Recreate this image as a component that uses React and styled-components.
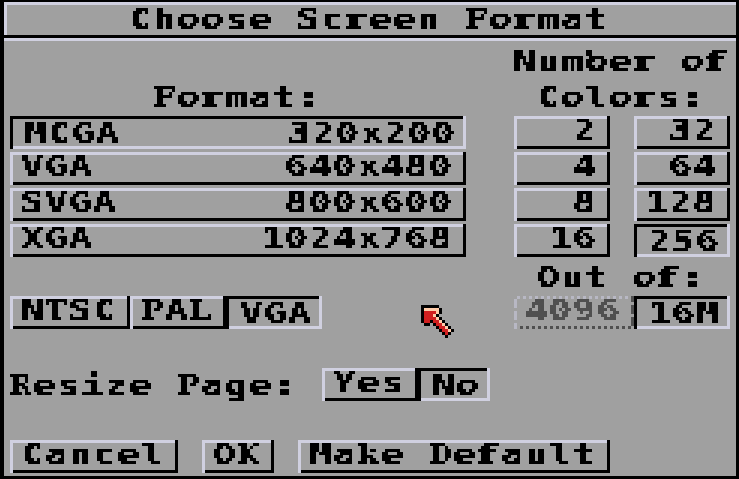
import React from "react";
import styled, { createGlobalStyle, css } from "styled-components";

const GREY = "#a0a0a0";
const LIGHT = "#d0d0e0";
const CELL = 24;

const Global = createGlobalStyle`
  html, body { margin: 0; padding: 0; background: #000; }
  * { box-sizing: border-box; }
`;

const FilterDefs = styled.svg`
  position: absolute;
  width: 0;
  height: 0;
`;

const Word = styled.span`
  display: flex;
  flex: none;
  width: ${(p) => p.$cells * CELL}px;
  height: 27px;
  text-align: left;
  filter: url(#pixels);
`;

const Letter = styled.span`
  flex: none;
  width: ${CELL}px;
  height: 27px;
  white-space: pre;
  font: bold 28.8px/27px "DejaVu Sans Mono", monospace;
  text-shadow: 0.5px 0 currentColor;
  transform-origin: 0 0;
  transform: translate(-1.3px, -2.5px) scaleX(1.3);
`;

/* Letters with narrow counters, which the extra weight would close up. */
const OpenLetter = styled(Letter)`
  text-shadow: none;
  transform: translate(-0.5px, -2.5px) scaleX(1.3);
`;

const SlabLetter = styled(Letter)`
  font-family: "DejaVu Serif", serif;
  text-shadow: none;
  transform: translate(-0.5px, -2.5px) scaleX(${(p) => p.$stretch});
`;

/* Horizontal stretch that makes each slab letter fill its 24px cell. */
const SLAB = {
  F: 1.08, T: 0.98, P: 1.02, D: 0.88, R: 0.96, L: 1.08, K: 0.86,
  r: 1.4, f: 1.5, k: 1.04,
};

function Text({ children }) {
  return (
    <Word $cells={children.length}>
      {[...children].map((c, i) => {
        if (SLAB[c]) return <SlabLetter key={i} $stretch={SLAB[c]}>{c}</SlabLetter>;
        if ("Mx2".includes(c)) return <OpenLetter key={i}>{c}</OpenLetter>;
        return <Letter key={i}>{c}</Letter>;
      })}
    </Word>
  );
}

const Dialog = styled.main`
  width: 739px;
  height: 479px;
  overflow: hidden;
  border: solid #000;
  border-width: 2px 3px 3px 4px;
  background: ${GREY};
  color: #000;
  display: flex;
  flex-direction: column;
`;

const TitleBar = styled.header`
  height: 36px;
  display: flex;
  justify-content: center;
  padding: 6px 0 0;
  box-shadow: inset 0 -3px #000, inset 3px 0 ${LIGHT}, inset 0 3px ${LIGHT};
`;

const Body = styled.div`
  flex: 1;
  border-top: 3px solid ${LIGHT};
  padding: 9px 6px 3px;
  display: flex;
  flex-direction: column;
`;

const Choices = styled.div`
  display: flex;
  justify-content: space-between;
  height: 279px;
`;

const Formats = styled.section`
  width: 456px;
  display: flex;
  flex-direction: column;
`;

const Colors = styled.section`
  width: 216px;
  display: flex;
  flex-direction: column;
`;

const Heading = styled.div`
  height: ${(p) => p.$height}px;
  display: flex;
  flex-direction: column;
  align-items: center;
  justify-content: flex-end;
  gap: 9px;
  padding-bottom: 3px;
`;

const List = styled.div`
  display: grid;
  gap: 3px;
`;

const ColorGrid = styled.div`
  display: grid;
  grid-template-columns: 96px 96px;
  gap: 3px 24px;
`;

const Strip = styled.div`
  display: flex;
  margin-top: ${(p) => p.$top || 0}px;
`;

const raised = css`
  padding: 3px 12px 0;
  box-shadow: inset 3px 0 ${LIGHT}, inset -3px 0 #000, inset 0 3px ${LIGHT},
    inset 0 -3px #000;
`;

const pressed = css`
  padding: 6px 9px 0 15px;
  box-shadow: inset 3px 0 #000, inset -3px 0 ${LIGHT}, inset 0 3px #000,
    inset 0 -3px ${LIGHT};
`;

const Button = styled.button`
  border: 0;
  border-radius: 0;
  margin: 0;
  height: 33px;
  background: ${GREY};
  color: #000;
  display: flex;
  align-items: flex-start;
  justify-content: ${(p) => p.$justify || "space-between"};
  ${(p) => (p.$pressed ? pressed : raised)}
`;

const GhostButton = styled.button`
  border: 0;
  margin: 0;
  width: 120px;
  height: 33px;
  padding: 3px 12px 0;
  display: flex;
  align-items: flex-start;
  color: #505050;
  background:
    repeating-linear-gradient(90deg, #b8b8c4 0 3px, transparent 3px 6px) 3px 0 / 114px 3px no-repeat,
    repeating-linear-gradient(90deg, #505050 0 3px, transparent 3px 6px) 6px 30px / 111px 3px no-repeat,
    repeating-linear-gradient(180deg, #b8b8c4 0 9px, transparent 9px 12px) 0 3px / 3px 30px no-repeat,
    linear-gradient(180deg, #505050 0 6px, transparent 6px 9px, #505050 9px 18px, transparent 18px 21px, #505050 21px 30px) 117px 0 / 3px 30px no-repeat,
    ${GREY};
`;

const ResizeRow = styled.div`
  display: flex;
  align-items: flex-start;
  margin-top: 39px;
  gap: 24px;
`;

const ResizeLabel = styled.div`
  padding-top: 6px;
`;

const Actions = styled.footer`
  display: flex;
  gap: 24px;
  margin-top: 39px;
`;

const Pointer = styled.svg`
  position: absolute;
  left: 421px;
  top: 305px;
`;

const POINTER_ROWS = [
  "kkkkkk",
  "kpppppk",
  "krrrrpk",
  "krrrpk",
  "krrrrpk",
  "krrkrrpk",
  " kk krrpk",
  "     krrpk",
  "      krrpk",
  "       krk",
  "        k",
];
const INK = { k: "#000", p: "#ffccaa", r: "#d02020" };

function Arrow() {
  return (
    <Pointer width="36" height="36" shapeRendering="crispEdges">
      {POINTER_ROWS.flatMap((row, y) =>
        [...row].map((c, x) =>
          INK[c] ? (
            <rect key={`${x}-${y}`} x={x * 3} y={y * 3} width="3" height="3" fill={INK[c]} />
          ) : null
        )
      )}
    </Pointer>
  );
}

const formats = [
  ["MCGA", "320x200", true],
  ["VGA", "640x480"],
  ["SVGA", "800x600"],
  ["XGA", "1024x768"],
];
const counts = ["2", "32", "4", "64", "8", "128", "16", "256"];

export default function App() {
  return (
    <>
      <Global />
      <FilterDefs aria-hidden="true">
        <filter id="pixels" x="0" y="0" width="100%" height="100%" colorInterpolationFilters="sRGB">
          <feFlood x="1" y="1" width="1" height="1" />
          <feComposite width="3" height="3" />
          <feTile result="grid" />
          <feComposite in="SourceGraphic" in2="grid" operator="in" />
          <feComponentTransfer>
            <feFuncA type="discrete" tableValues="0 1" />
          </feComponentTransfer>
          <feMorphology operator="dilate" radius="1" />
        </filter>
      </FilterDefs>
      <Dialog>
        <TitleBar>
          <Text>Choose Screen Format</Text>
        </TitleBar>
        <Body>
          <Choices>
            <Formats>
              <Heading $height={66}>
                <Text>Format:</Text>
              </Heading>
              <List>
                {formats.map(([name, size, on]) => (
                  <Button key={name} $pressed={on}>
                    <Text>{name}</Text>
                    <Text>{size}</Text>
                  </Button>
                ))}
              </List>
              <Strip $top={39}>
                <Button><Text>NTSC</Text></Button>
                <Button><Text>PAL</Text></Button>
                <Button $pressed><Text>VGA</Text></Button>
              </Strip>
            </Formats>
            <Colors>
              <Heading $height={66}>
                <Text>Number of</Text>
                <Text>Colors:</Text>
              </Heading>
              <ColorGrid>
                {counts.map((n) => (
                  <Button key={n} $justify="flex-end" $pressed={n === "256"}>
                    <Text>{n}</Text>
                  </Button>
                ))}
              </ColorGrid>
              <Heading $height={39}>
                <Text>Out of:</Text>
              </Heading>
              <Strip>
                <GhostButton disabled><Text>4096</Text></GhostButton>
                <Button $pressed><Text>16M</Text></Button>
              </Strip>
            </Colors>
          </Choices>
          <ResizeRow>
            <ResizeLabel><Text>Resize Page:</Text></ResizeLabel>
            <Strip>
              <Button><Text>Yes</Text></Button>
              <Button $pressed><Text>No</Text></Button>
            </Strip>
          </ResizeRow>
          <Actions>
            <Button><Text>Cancel</Text></Button>
            <Button><Text>OK</Text></Button>
            <Button><Text>Make Default</Text></Button>
          </Actions>
        </Body>
      </Dialog>
      <Arrow />
    </>
  );
}
